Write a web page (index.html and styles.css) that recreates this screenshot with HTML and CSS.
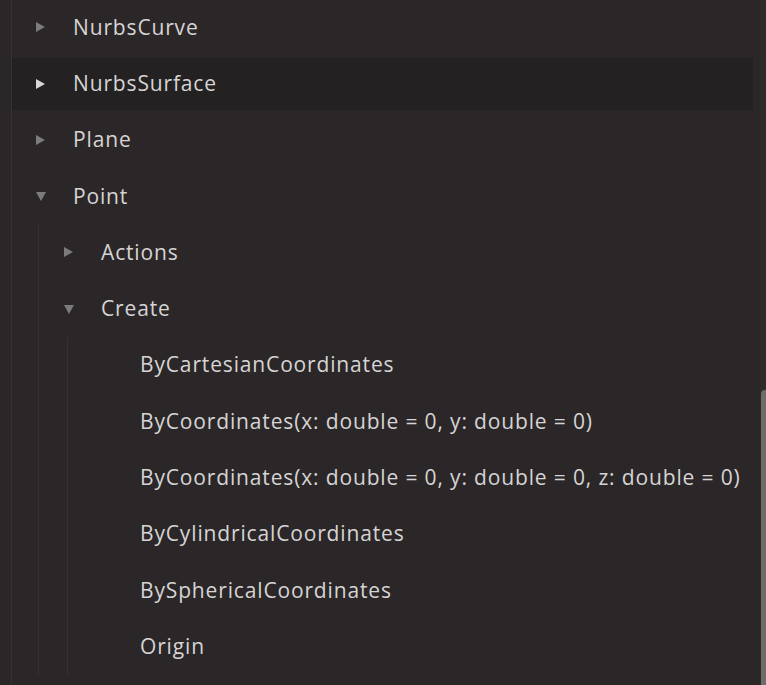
FILE: index.html
```
<!DOCTYPE html>
<html>
<head>
<meta charset="utf-8">
<link rel="stylesheet" href="styles.css">
</head>
<body>
<div class="frame">
  <div class="tree">
    <div class="row"><span class="arrow right"></span><span class="label">NurbsCurve</span></div>
    <div class="row selected"><span class="arrow right bright"></span><span class="label">NurbsSurface</span></div>
    <div class="row"><span class="arrow right"></span><span class="label">Plane</span></div>
    <div class="row"><span class="arrow down"></span><span class="label">Point</span></div>
    <div class="children">
      <div class="row"><span class="arrow right"></span><span class="label">Actions</span></div>
      <div class="row"><span class="arrow down"></span><span class="label">Create</span></div>
      <div class="children inner">
        <div class="row leaf"><span class="label">ByCartesianCoordinates</span></div>
        <div class="row leaf"><span class="label">ByCoordinates(x: double = 0, y: double = 0)</span></div>
        <div class="row leaf"><span class="label">ByCoordinates(x: double = 0, y: double = 0, z: double = 0)</span></div>
        <div class="row leaf"><span class="label">ByCylindricalCoordinates</span></div>
        <div class="row leaf"><span class="label">BySphericalCoordinates</span></div>
        <div class="row leaf"><span class="label">Origin</span></div>
      </div>
    </div>
  </div>
  <div class="scrolltrack"><div class="thumb"></div></div>
</div>
</body>
</html>
```
FILE: styles.css
```
html, body {
  margin: 0;
  padding: 0;
  background: #2b2728;
  height: 100%;
  overflow: hidden;
}
.frame {
  display: flex;
  height: 685px;
  padding-left: 11px;
}
.tree {
  width: 741px;
  margin-top: -1px;
  border-left: 1px solid #363233;
  font-family: "Open Sans", sans-serif;
  font-size: 21px;
  letter-spacing: 0.85px;
  color: #d6d4d4;
}
.row {
  height: 56.3px;
  display: flex;
  align-items: center;
  padding-left: 24px;
  box-sizing: border-box;
}
.row.selected {
  background: #232121;
  height: 51.3px;
  margin: 3px 0 2px;
}
.label {
  padding-bottom: 1px;
}
.arrow {
  width: 10px;
  height: 10px;
  margin-right: 27px;
  flex: none;
  position: relative;
}
.arrow.right::before {
  content: "";
  position: absolute;
  left: 0;
  top: 0;
  border-left: 9px solid #7e7b7b;
  border-top: 5px solid transparent;
  border-bottom: 5px solid transparent;
}
.arrow.right.bright::before {
  border-left-color: #d8d6d6;
}
.arrow.down::before {
  content: "";
  position: absolute;
  left: 0;
  top: 1px;
  border-top: 9px solid #7e7b7b;
  border-left: 5px solid transparent;
  border-right: 5px solid transparent;
}
.children {
  margin-left: 26px;
  border-left: 1px solid #363233;
}
.children .row {
  padding-left: 25px;
}
.children.inner {
  margin-left: 28px;
}
.children .row.leaf {
  padding-left: 72px;
}
.scrolltrack {
  margin-left: 7px;
  flex: 1;
  background: #2e2a2b;
  display: flex;
  flex-direction: column;
  justify-content: flex-end;
}
.thumb {
  height: 295px;
  background: #6e6b6c;
  border-top-left-radius: 4px;
  margin-left: 1px;
}
```
